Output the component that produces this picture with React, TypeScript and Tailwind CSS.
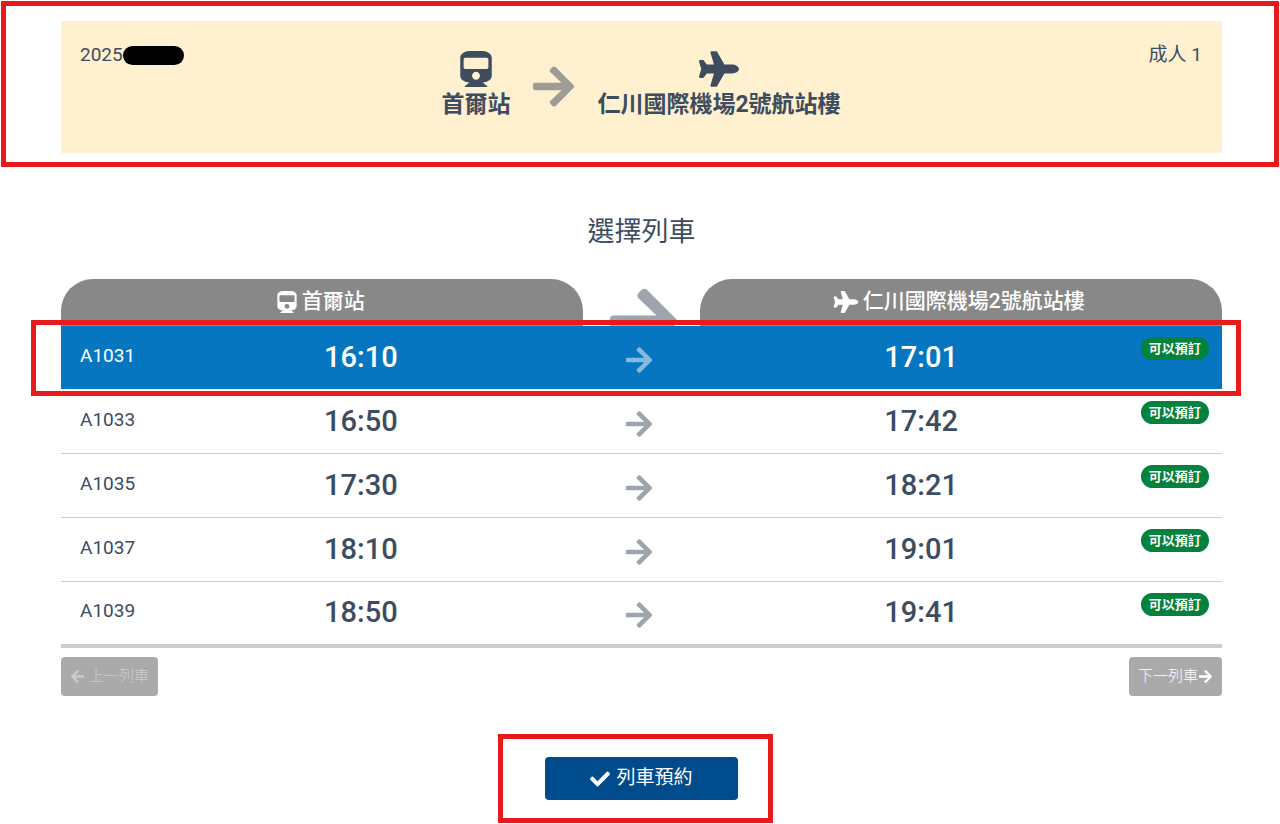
import React, { useState } from 'react';
import { FaArrowLeft, FaArrowRight, FaCheck, FaPlane, FaTrain } from 'react-icons/fa';

interface Train {
  no: string;
  departure: string;
  arrival: string;
}

const FROM = '首爾站';
const TO = '仁川國際機場2號航站樓';

const TRAINS: Train[] = [
  { no: 'A1031', departure: '16:10', arrival: '17:01' },
  { no: 'A1033', departure: '16:50', arrival: '17:42' },
  { no: 'A1035', departure: '17:30', arrival: '18:21' },
  { no: 'A1037', departure: '18:10', arrival: '19:01' },
  { no: 'A1039', departure: '18:50', arrival: '19:41' },
];

const TripSummary: React.FC = () => (
  <section className="m-px border-5 border-[#e81a1c] pt-[15px] pr-[52px] pb-[9px] pl-[55px]">
    <div className="flex h-[132px] justify-between bg-[#fff1cf] pt-5 pr-5 pl-[19px]">
      <div className="flex h-7 flex-1 items-center text-[19px]">
        2025
        <span className="h-[19px] w-[61px] rounded-full bg-black" />
      </div>
      <div className="flex text-[23px] leading-9 font-bold">
        <div className="flex flex-col items-center pt-[10px]">
          <FaTrain className="size-9" />
          <span>{FROM}</span>
        </div>
        <FaArrowRight className="mx-5 mt-[22px] size-[47px] opacity-50" />
        <div className="flex flex-col items-center pt-[10px]">
          <FaPlane className="h-9 w-10" />
          <span>{TO}</span>
        </div>
      </div>
      <div className="flex-1 text-right text-[19px] leading-7">成人 1</div>
    </div>
  </section>
);

interface TrainTableProps {
  selected: string;
  onSelect: (no: string) => void;
}

const TrainTable: React.FC<TrainTableProps> = ({ selected, onSelect }) => (
  <div className="relative">
    <table className="w-full table-fixed border-separate border-spacing-0">
      <colgroup>
        <col className="w-[7%]" />
        <col className="w-[38%]" />
        <col className="w-[10%]" />
        <col className="w-[38%]" />
        <col className="w-[7%]" />
      </colgroup>
      <thead>
        <tr className="text-[21px] text-white">
          <th colSpan={2} className="h-[47px] rounded-t-[32px] bg-[#888888] p-0 pr-1 pb-[2px] font-medium">
            <span className="flex items-center justify-center gap-1">
              <FaTrain className="size-[22px]" />
              {FROM}
            </span>
          </th>
          <th className="p-0">
            <div className="flex h-[47px] items-start justify-center overflow-hidden pt-1 pl-1">
              <FaArrowRight className="size-[77px] shrink-0 text-[#3d4c5f] opacity-50" />
            </div>
          </th>
          <th colSpan={2} className="h-[47px] rounded-t-[32px] bg-[#888888] p-0 pr-1 pb-[2px] font-medium">
            <span className="flex items-center justify-center gap-1">
              <FaPlane className="h-[22px] w-[26px]" />
              {TO}
            </span>
          </th>
        </tr>
      </thead>
      <tbody>
        {TRAINS.map((train) => (
          <tr
            key={train.no}
            onClick={() => onSelect(train.no)}
            className={`group cursor-pointer ${selected === train.no ? 'bg-[#0576bf] text-white [&>td]:border-white' : '[&>td]:border-[#cccccc]'}`}
          >
            <td className="h-16 border-b p-0 pb-1 pl-[19px] text-[19px] leading-7 whitespace-nowrap group-last:h-[66px] group-last:border-b-4">
              {train.no}
            </td>
            <td className="border-b p-0 pr-1 pb-[2px] text-center text-[29px] leading-10 font-medium group-last:border-b-4">
              {train.departure}
            </td>
            <td className="border-b p-0 pt-1 pr-1 group-last:border-b-4">
              <FaArrowRight className="mx-auto size-[30px] opacity-50" />
            </td>
            <td className="border-b p-0 pb-[2px] pl-[2px] text-center text-[29px] leading-10 font-medium group-last:border-b-4">
              {train.arrival}
            </td>
            <td className="border-b p-0 pt-[11px] align-top group-last:border-b-4">
              <span className="block h-[23px] w-[68px] rounded-full bg-[#04823d] text-center text-[13px] leading-[23px] font-bold text-white">
                可以預訂
              </span>
            </td>
          </tr>
        ))}
      </tbody>
    </table>
    <div className="pointer-events-none absolute top-[41px] -right-[19px] -left-[30px] h-[76px] border-5 border-[#e81a1c]" />
  </div>
);

export default function App() {
  const [selected, setSelected] = useState('A1031');

  return (
    <main className="bg-white font-['Roboto','Noto_Sans_CJK_TC',sans-serif] text-[#3d4c5f]">
      <TripSummary />

      <div className="pr-[58px] pl-[61px]">
        <h1 className="pt-11 pb-[27px] text-center text-[27px] leading-10">選擇列車</h1>

        <TrainTable selected={selected} onSelect={setSelected} />

        <div className="flex justify-between pt-[9px] text-[15px] text-white">
          <button
            type="button"
            disabled
            className="flex h-[39px] items-center gap-1 rounded bg-[#aaaaaa] px-[9px] font-light text-[#cccccc]"
          >
            <FaArrowLeft />
            上一列車
          </button>
          <button type="button" className="flex h-[39px] items-center rounded bg-[#aaaaaa] px-[9px] font-light">
            下一列車
            <FaArrowRight />
          </button>
        </div>
      </div>

      <div className="flex justify-center pt-[38px] pr-[9px]">
        <div className="border-5 border-[#e81a1c] py-[18px] pr-[30px] pl-[42px]">
          <button
            type="button"
            className="flex h-[43px] w-[193px] items-center justify-center gap-[6px] rounded bg-[#004b8b] text-[19px] text-white"
          >
            <FaCheck className="size-5" />
            列車預約
          </button>
        </div>
      </div>
    </main>
  );
}
